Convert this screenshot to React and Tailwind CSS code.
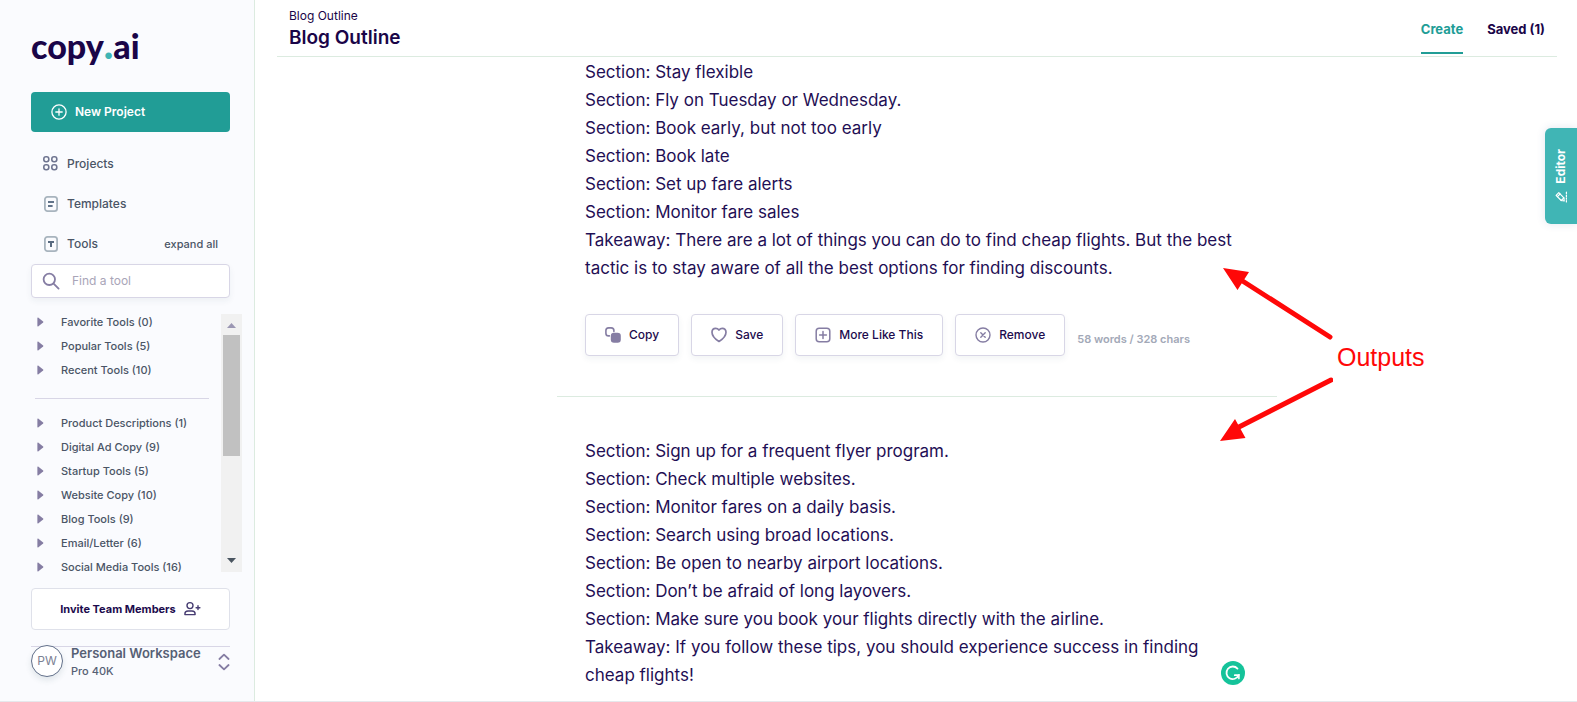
const PINNED_TOOLS = ["Favorite Tools (0)", "Popular Tools (5)", "Recent Tools (10)"];

const CATEGORIES = [
  "Product Descriptions (1)",
  "Digital Ad Copy (9)",
  "Startup Tools (5)",
  "Website Copy (10)",
  "Blog Tools (9)",
  "Email/Letter (6)",
  "Social Media Tools (16)",
];

const FIRST_OUTLINE = [
  "Section: Stay flexible",
  "Section: Fly on Tuesday or Wednesday.",
  "Section: Book early, but not too early",
  "Section: Book late",
  "Section: Set up fare alerts",
  "Section: Monitor fare sales",
  "Takeaway: There are a lot of things you can do to find cheap flights. But the best tactic is to stay aware of all the best options for finding discounts.",
];

const SECOND_OUTLINE = [
  "Section: Sign up for a frequent flyer program.",
  "Section: Check multiple websites.",
  "Section: Monitor fares on a daily basis.",
  "Section: Search using broad locations.",
  "Section: Be open to nearby airport locations.",
  "Section: Don’t be afraid of long layovers.",
  "Section: Make sure you book your flights directly with the airline.",
  "Takeaway: If you follow these tips, you should experience success in finding cheap flights!",
];

function PlusCircle() {
  return (
    <svg className="size-4" viewBox="0 0 16 16" fill="none" stroke="currentColor" strokeWidth="1.3" strokeLinecap="round" aria-hidden="true">
      <circle cx="8" cy="8" r="7.1" />
      <path d="M8 4.8v6.4M4.8 8h6.4" />
    </svg>
  );
}

function GridIcon() {
  return (
    <svg className="size-4" viewBox="0 0 16 16" fill="none" stroke="#6f7590" strokeWidth="1.6" aria-hidden="true">
      <rect x="0.8" y="0.8" width="5" height="5" rx="2.2" />
      <rect x="8.8" y="0.8" width="5" height="5" rx="2.2" />
      <rect x="0.8" y="8.8" width="5" height="5" rx="2.2" />
      <rect x="8.8" y="8.8" width="5" height="5" rx="2.2" />
    </svg>
  );
}

function TemplateIcon() {
  return (
    <svg className="size-4" viewBox="0 0 16 16" fill="none" aria-hidden="true">
      <rect x="1.9" y="0.9" width="12.2" height="14.2" rx="2.6" stroke="#a8b4be" strokeWidth="1.8" />
      <path d="M5 6h6M5 10h4.6" stroke="#62748a" strokeWidth="1.8" />
    </svg>
  );
}

function ToolIcon() {
  return (
    <svg className="size-4" viewBox="0 0 16 16" fill="none" aria-hidden="true">
      <rect x="1.9" y="0.9" width="12.2" height="14.2" rx="2.6" stroke="#a8b4be" strokeWidth="1.8" />
      <path d="M5 6h6M8 6v5" stroke="#586a80" strokeWidth="2" />
    </svg>
  );
}

function SearchIcon() {
  return (
    <svg className="size-[18px] shrink-0" viewBox="0 0 18 18" fill="none" stroke="#857da3" strokeWidth="1.8" strokeLinecap="round" aria-hidden="true">
      <circle cx="7.3" cy="7.3" r="5.7" />
      <path d="M11.6 11.6L16.6 16.6" />
    </svg>
  );
}

function Caret() {
  return (
    <svg className="h-[10px] w-[7px]" viewBox="0 0 7 10" fill="#857da3" aria-hidden="true">
      <path d="M0.4 0.9Q0.4 0.2 1.1 0.5L6.1 4.4Q6.8 5 6.1 5.6L1.1 9.5Q0.4 9.8 0.4 9.1Z" />
    </svg>
  );
}

function UserPlus() {
  return (
    <svg className="h-4 w-[17px]" viewBox="0 0 17 16" fill="none" stroke="#473d72" strokeWidth="1.4" strokeLinecap="round" strokeLinejoin="round" aria-hidden="true">
      <circle cx="6" cy="4.6" r="3" />
      <path d="M0.9 13.6v-0.6c0-1.7 1.4-3 3.1-3h4c1.7 0 3.1 1.3 3.1 3v0.6z" />
      <path d="M14 4.8v3.8M12.1 6.7h3.8" />
    </svg>
  );
}

function UpDown() {
  return (
    <svg className="h-[18px] w-3" viewBox="0 0 12 18" fill="none" stroke="#857da3" strokeWidth="1.8" strokeLinecap="round" strokeLinejoin="round" aria-hidden="true">
      <path d="M1.4 6L6 1.6L10.6 6M1.4 12L6 16.4L10.6 12" />
    </svg>
  );
}

function CopyIcon() {
  return (
    <svg className="size-4" viewBox="0 0 16 16" fill="none" aria-hidden="true">
      <path d="M4.4 8.9H3.6A2.7 2.7 0 0 1 0.9 6.2V3.6A2.7 2.7 0 0 1 3.6 0.9H6.2A2.7 2.7 0 0 1 8.9 3.6V4.4" stroke="#857da3" strokeWidth="1.6" strokeLinecap="round" />
      <rect x="5.8" y="5.8" width="10" height="10" rx="3.2" fill="#857da3" />
    </svg>
  );
}

function HeartIcon() {
  return (
    <svg className="size-4" viewBox="0 0 16 16" fill="none" stroke="#857da3" strokeWidth="1.7" strokeLinejoin="round" aria-hidden="true">
      <path d="M8 3.1C7 1.8 5.9 1.3 4.7 1.3C2.5 1.3 1 3 1 5.3C1 9.4 4.6 12.4 8 14.5C11.4 12.4 15 9.4 15 5.3C15 3 13.5 1.3 11.3 1.3C10.1 1.3 9 1.8 8 3.1Z" />
    </svg>
  );
}

function PlusSquare() {
  return (
    <svg className="size-4" viewBox="0 0 16 16" fill="none" stroke="#857da3" strokeWidth="1.5" strokeLinecap="round" aria-hidden="true">
      <rect x="1.2" y="1.2" width="13.6" height="13.6" rx="3" />
      <path d="M8 4.6v6.8M4.6 8h6.8" />
    </svg>
  );
}

function CloseCircle() {
  return (
    <svg className="size-4" viewBox="0 0 16 16" fill="none" stroke="#857da3" strokeWidth="1.4" strokeLinecap="round" aria-hidden="true">
      <circle cx="8" cy="8" r="7" />
      <path d="M5.8 5.8l4.4 4.4M10.2 5.8l-4.4 4.4" />
    </svg>
  );
}

function PencilIcon() {
  return (
    <svg className="size-3 -rotate-90" viewBox="0 0 12 12" fill="none" stroke="currentColor" strokeWidth="1.2" strokeLinecap="round" strokeLinejoin="round" aria-hidden="true">
      <path d="M2 9.2L2.5 6.2L7.6 1.1L10.3 3.8L5.2 8.9Z" />
      <path d="M2.5 6.2L5.2 8.9M6.3 2.4L9 5.1" />
      <path d="M1 11.4h10" strokeDasharray="1.4 1.4" />
    </svg>
  );
}

function NavLink({ icon, children }) {
  return (
    <a href="#" className="flex items-center gap-2 text-[12px] leading-4 font-medium text-[#4a5566]">
      {icon}
      {children}
    </a>
  );
}

function ToolGroup({ children }) {
  return (
    <li>
      <button type="button" className="flex h-6 w-full items-center gap-[17px] pl-[6px] text-left text-[11px] leading-4 font-medium whitespace-nowrap text-[#4a5566]">
        <Caret />
        {children}
      </button>
    </li>
  );
}

function ActionButton({ icon, children }) {
  return (
    <button type="button" className="flex h-[42px] items-center gap-2 rounded-[4px] border border-[#d8d6e6] bg-white px-[19px] text-[12px] font-medium whitespace-nowrap text-[#1c0b4d] shadow-[0_3px_6px_rgba(30,70,80,0.06)]">
      {icon}
      {children}
    </button>
  );
}

function Outline({ lines }) {
  return (
    <div className="px-7 text-[17px] leading-7 text-[#1f0f55]">
      {lines.map((line) => (
        <p key={line}>{line}</p>
      ))}
    </div>
  );
}

function Sidebar() {
  return (
    <aside className="flex w-[255px] shrink-0 flex-col border-r border-[#dcebe0] bg-[#fafbfe] pt-6 pr-6 pl-[31px]">
      <a href="#" className="h-12 shrink-0 font-[Lato,sans-serif] text-[34px] leading-[44px] font-black text-[#1a0548]">
        copy<span className="text-[40px] leading-none text-[#40b5b5]">.</span>ai
      </a>
      <button type="button" className="mt-5 flex h-10 shrink-0 items-center gap-2 rounded-[4px] bg-[#219d96] px-5 text-[12px] font-semibold text-white">
        <PlusCircle />
        New Project
      </button>
      <nav className="mt-6 flex flex-col gap-6 pr-3 pl-3">
        <NavLink icon={<GridIcon />}>Projects</NavLink>
        <NavLink icon={<TemplateIcon />}>Templates</NavLink>
        <div className="flex items-center justify-between">
          <NavLink icon={<ToolIcon />}>Tools</NavLink>
          <button type="button" className="text-[11px] leading-4 font-medium text-[#4a5566]">expand all</button>
        </div>
      </nav>
      <label className="mt-3 flex h-[34px] shrink-0 items-center gap-3 rounded-[4px] border border-[#d8d6e6] bg-white px-[10px] shadow-[0_3px_6px_rgba(30,70,80,0.06)]">
        <SearchIcon />
        <input type="text" aria-label="Find a tool" placeholder="Find a tool" className="w-full min-w-0 bg-transparent text-[12px] text-[#4a5566] outline-none placeholder:text-[#a9a5b8]" />
      </label>
      <div className="mt-4 -mr-3 flex h-[258px] shrink-0">
        <div className="min-w-0 flex-1">
          <ul className="-mt-1">
            {PINNED_TOOLS.map((name) => (
              <ToolGroup key={name}>{name}</ToolGroup>
            ))}
          </ul>
          <hr className="mt-4 mr-3 mb-3 ml-1 border-[#d8d6e6]" />
          <ul>
            {CATEGORIES.map((name) => (
              <ToolGroup key={name}>{name}</ToolGroup>
            ))}
          </ul>
        </div>
        <div className="flex w-[21px] flex-col items-center bg-[#f1f1f1]" aria-hidden="true">
          <svg className="h-[21px] w-[9px]" viewBox="0 0 9 21" fill="#9b97b3">
            <path d="M0 14L4.5 9L9 14Z" />
          </svg>
          <div className="h-[121px] w-[17px] bg-[#c1c1c1]" />
          <svg className="mt-auto h-[21px] w-[9px]" viewBox="0 0 9 21" fill="#4a5560">
            <path d="M0 7L4.5 12L9 7Z" />
          </svg>
        </div>
      </div>
      <button type="button" className="mt-4 flex h-[42px] shrink-0 items-center justify-center gap-2 rounded-[4px] border border-[#dfe1ea] bg-white text-[11px] font-bold text-[#1c0b4d]">
        Invite Team Members
        <UserPlus />
      </button>
      <button type="button" className="mt-4 flex shrink-0 items-start gap-2 border-t border-[#d8d6e6] text-left">
        <span className="-mt-[2px] flex size-8 shrink-0 items-center justify-center rounded-full border border-[#62708a] bg-white text-[12px] text-[#7b8194] shadow-[0_3px_6px_rgba(30,70,80,0.12)]">
          PW
        </span>
        <span className="-mt-[2px] min-w-0 flex-1 whitespace-nowrap text-[#566075]">
          <span className="block text-[13px] leading-4 font-semibold">Personal Workspace</span>
          <span className="mt-[2px] block text-[11px] leading-4 font-medium">Pro 40K</span>
        </span>
        <span className="mt-[6px]">
          <UpDown />
        </span>
      </button>
    </aside>
  );
}

function Header() {
  return (
    <header className="mr-5 ml-[22px] flex h-[57px] shrink-0 items-start justify-between border-b border-[#dcebe0] pr-3 pl-3 text-[#1a0548]">
      <div>
        <p className="mt-2 text-[12px] leading-4">Blog Outline</p>
        <h1 className="text-[19px] leading-7 font-semibold">Blog Outline</h1>
      </div>
      <nav className="mt-[17px] flex items-start gap-6 text-[13px] leading-6 font-bold">
        <a href="#" className="border-b-2 border-[#219d96] pb-[11px] text-[#219d96]">Create</a>
        <a href="#">Saved (1)</a>
      </nav>
    </header>
  );
}

function Callout() {
  return (
    <div className="absolute top-[209px] left-[662px] flex items-center">
      <svg className="h-[178px] w-[114px] shrink-0" viewBox="0 0 114 178" fill="#ff0808" stroke="#ff0808" aria-hidden="true">
        <path d="M22 14L111 71M18 162L112 114" strokeWidth="5" strokeLinecap="round" />
        <path d="M4 2L30 6L18.5 24ZM1 175L16 153L26.5 172Z" stroke="none" />
      </svg>
      <span className="pt-1 pl-1 font-['Liberation_Sans',sans-serif] text-[25px] leading-7 text-[#ff0808]">Outputs</span>
    </div>
  );
}

export default function App() {
  return (
    <div className="flex h-screen overflow-hidden border-b border-[#e6e8ec] bg-white font-[Inter,sans-serif]">
      <Sidebar />
      <main className="relative flex min-w-0 flex-1 flex-col">
        <Header />
        <div className="mr-5 ml-[22px] min-h-0 flex-1 overflow-hidden">
          <div className="relative mx-auto max-w-[720px] pt-px">
            <Outline lines={FIRST_OUTLINE} />
            <div className="mt-8 flex items-center gap-3 px-7">
              <ActionButton icon={<CopyIcon />}>Copy</ActionButton>
              <ActionButton icon={<HeartIcon />}>Save</ActionButton>
              <ActionButton icon={<PlusSquare />}>More Like This</ActionButton>
              <ActionButton icon={<CloseCircle />}>Remove</ActionButton>
              <span className="pt-2 text-[11px] leading-4 font-semibold whitespace-nowrap text-[#a3a9b8]">58 words / 328 chars</span>
            </div>
            <hr className="my-10 border-[#dcebe0]" />
            <Outline lines={SECOND_OUTLINE} />
            <Callout />
            <button type="button" aria-label="Grammarly" className="absolute right-8 bottom-1">
              <svg className="size-6" viewBox="0 0 24 24" fill="none" aria-hidden="true">
                <circle cx="12" cy="12" r="12" fill="#15c39a" />
                <path d="M16.5 7.6A6.3 6.3 0 1 0 17.6 14.2H13.8" stroke="#fff" strokeWidth="1.8" strokeLinecap="round" />
                <path d="M17.9 13.8V17.6" stroke="#fff" strokeWidth="1.6" strokeLinecap="round" />
              </svg>
            </button>
          </div>
        </div>
        <button type="button" className="absolute top-32 right-0 flex h-24 w-8 flex-col items-center justify-center gap-2 rounded-l-[6px] bg-[#40b5b5] text-white shadow-[0_0_8px_rgba(60,80,140,0.15)]">
          <span className="rotate-180 text-[12px] leading-4 font-bold [writing-mode:vertical-rl]">Editor</span>
          <PencilIcon />
        </button>
      </main>
    </div>
  );
}
